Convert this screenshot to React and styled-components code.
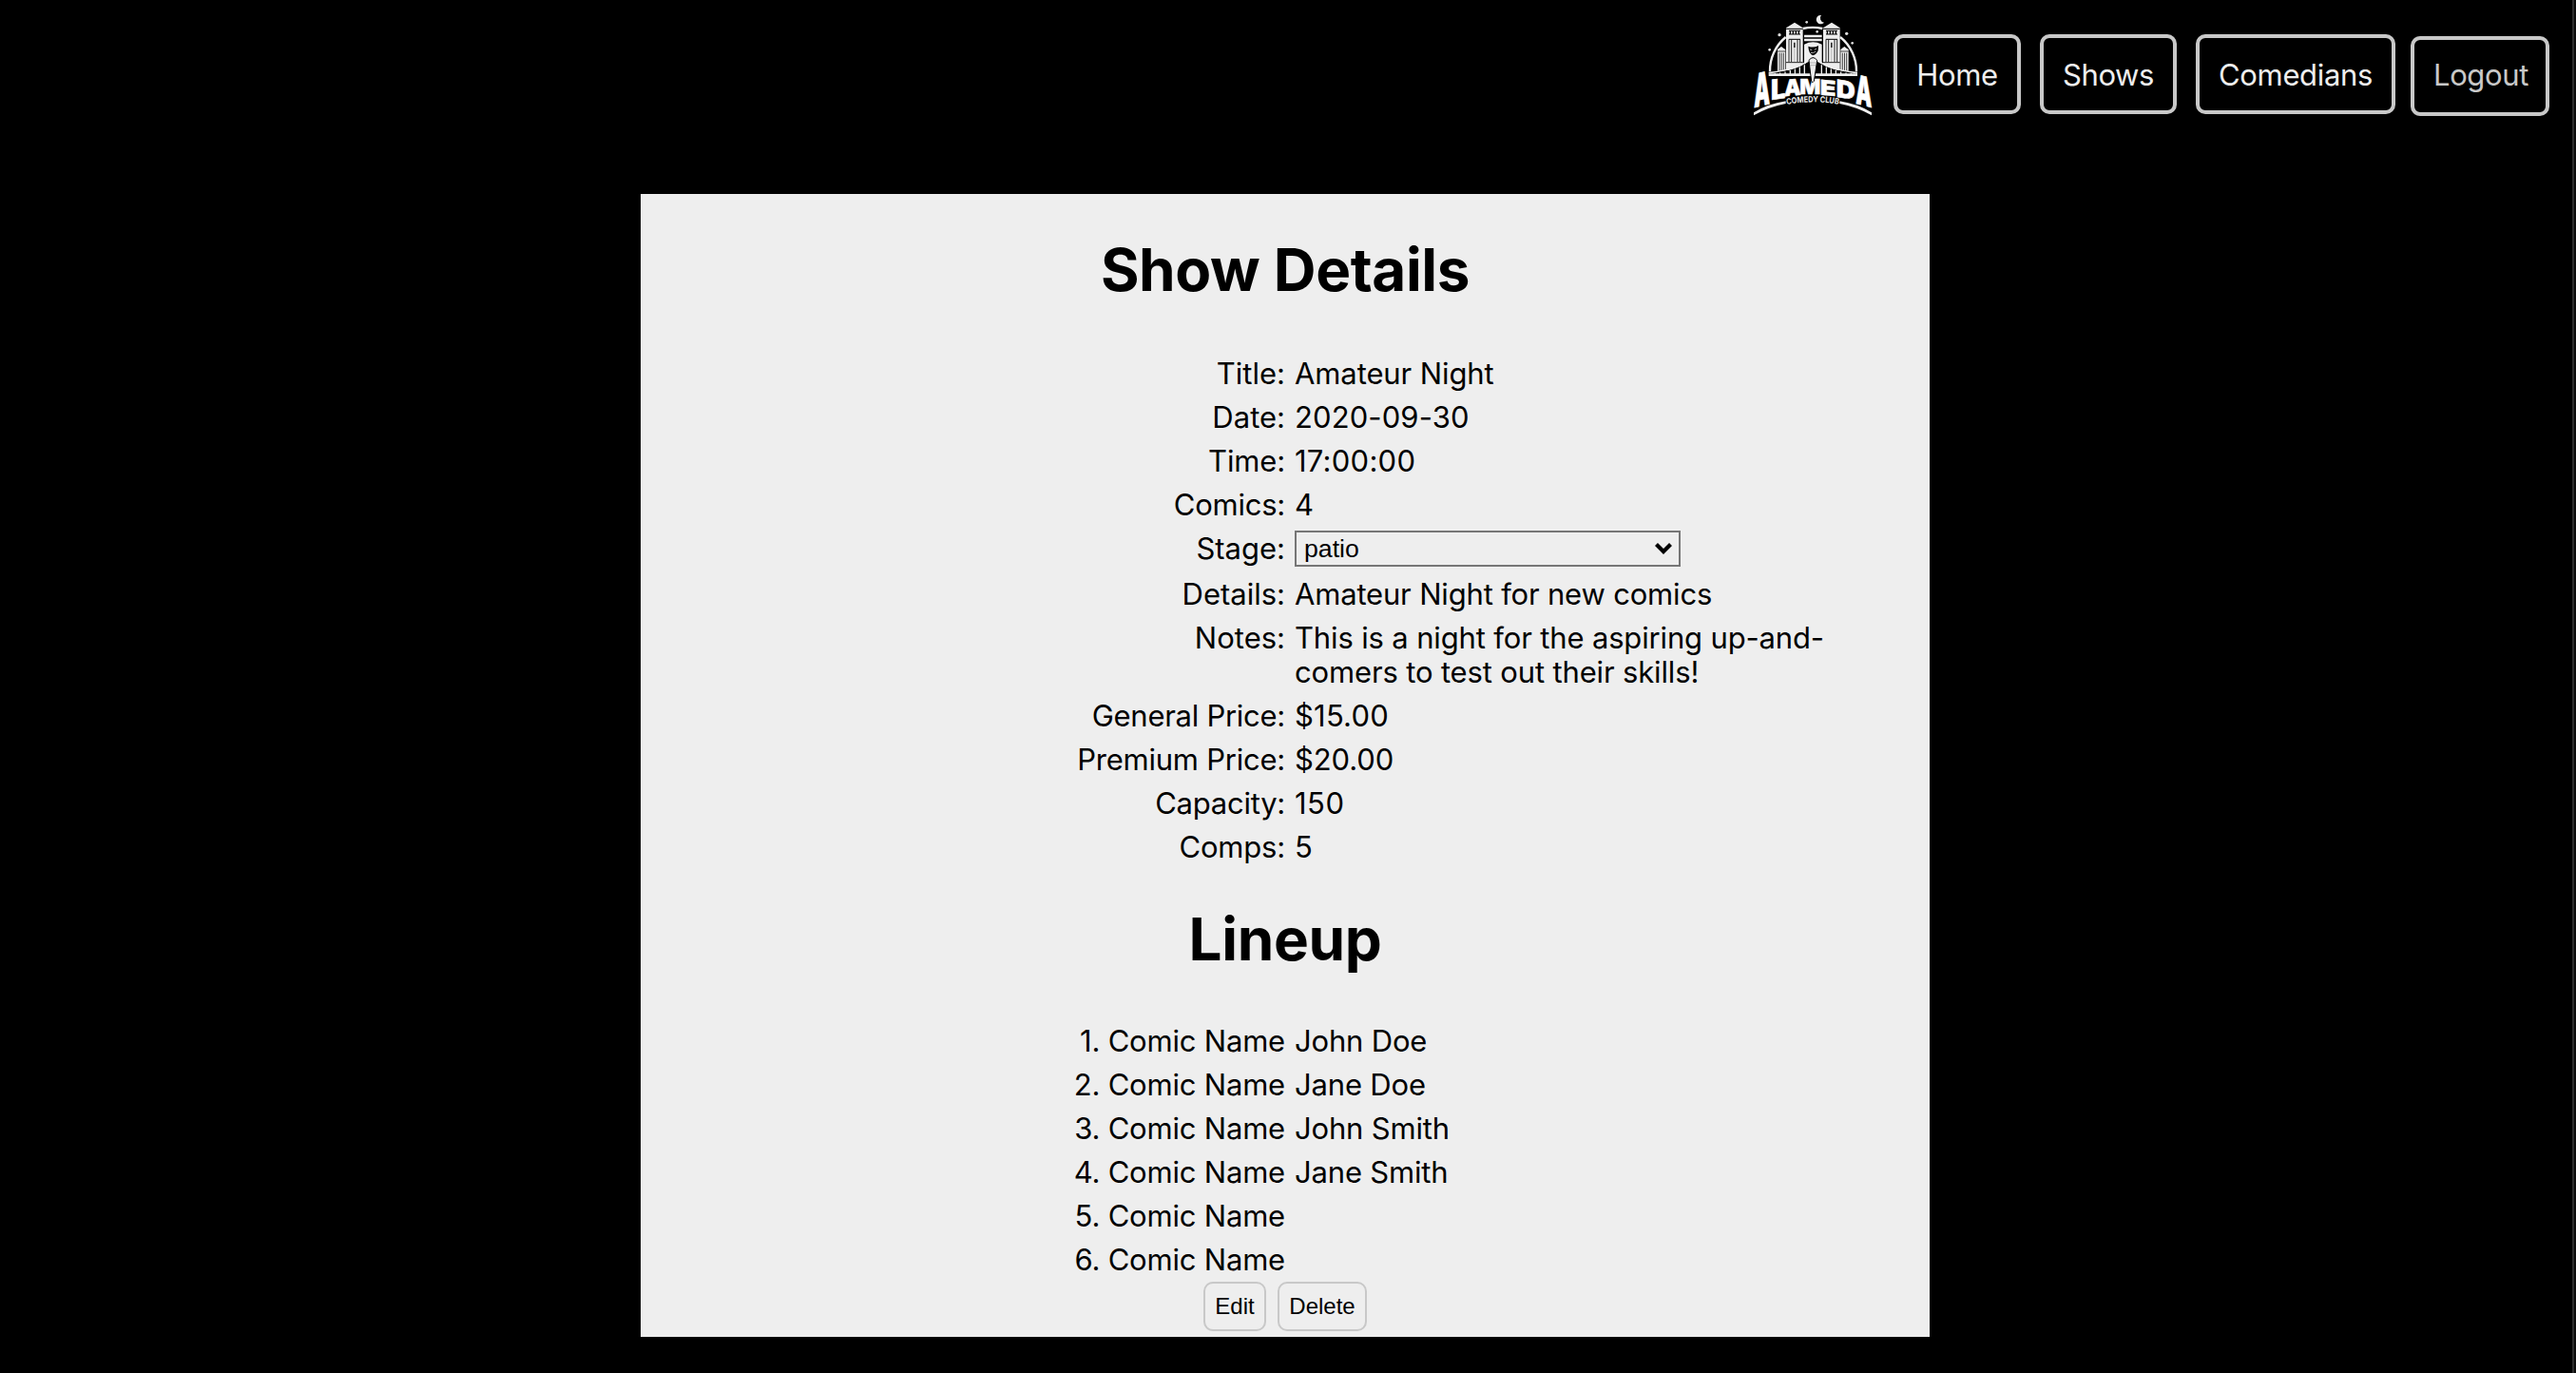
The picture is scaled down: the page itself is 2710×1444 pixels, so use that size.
import React from 'react';
import styled, { createGlobalStyle } from 'styled-components';

const GlobalStyle = createGlobalStyle`
  * { box-sizing: border-box; }
  body {
    margin: 0;
    background: #000;
    color: #000;
    font-family: Inter, "Liberation Sans", sans-serif;
    font-size: 31px;
    overflow: hidden;
  }
`;

const Page = styled.div`
  width: 100%;
  height: 1444px;
  background: #000;
  display: flex;
`;

const Content = styled.div`
  flex: 1;
`;

const ScrollTrack = styled.div`
  width: 4px;
  background: #0c0c0c;
  border-left: 2px solid #2e2e2e;
`;

const Nav = styled.nav`
  height: 204px;
  padding: 14px 24px 0 0;
  display: flex;
  justify-content: flex-end;
  align-items: flex-start;
`;

const Logo = styled.svg`
  width: 128px;
  height: 110px;
  margin-right: 20px;
  display: block;
`;

const NavButton = styled.button`
  width: ${(p) => p.$w}px;
  height: 84px;
  margin: 22px ${(p) => p.$gap || 0}px 0 0;
  padding: 2px 0 0;
  border: 4px solid #c8c8c8;
  border-radius: 10px;
  background: transparent;
  color: #eee;
  font: 400 31px/36px Inter, sans-serif;
  letter-spacing: -0.35px;
`;

const LogoutButton = styled(NavButton)`
  margin-top: 24px;
  padding: 0 0 2px 2px;
  color: #c8c8c8;
`;

const Panel = styled.main`
  width: 1356px;
  height: 1202px;
  margin-left: 674px;
  background: #eee;
`;

const Heading = styled.h1`
  margin: 0;
  height: ${(p) => p.$h}px;
  padding-top: ${(p) => p.$top}px;
  text-align: center;
  font-size: 62px;
  line-height: 75px;
  font-weight: 700;
  letter-spacing: -0.38px;
`;

const Row = styled.div`
  display: grid;
  grid-template-columns: 678px 570px;
  column-gap: 10px;
  line-height: 36px;
  min-height: 36px;
  margin-bottom: ${(p) => p.$mb || 10}px;
`;

const Label = styled.span`
  text-align: right;
  white-space: nowrap;
  letter-spacing: ${(p) => p.$ls || 0}px;
`;

const Value = styled.span`
  letter-spacing: ${(p) => p.$ls || 0}px;
`;

const Select = styled.div`
  width: 406px;
  height: 38px;
  margin: -1px 0 -1px;
  padding: 0 7px 0 8px;
  border: 2px solid #767676;
  display: flex;
  align-items: center;
  justify-content: space-between;
  font: 26.67px/34px "Liberation Sans", sans-serif;
`;

const Chevron = styled.svg`
  width: 18px;
  height: 13px;
  overflow: visible;
`;

const Actions = styled.div`
  display: flex;
  gap: 12px;
  padding-left: 592px;
`;

const ActionButton = styled.button`
  width: ${(p) => p.$w}px;
  height: 52px;
  padding: 0;
  border: 2px solid #c8c8c8;
  border-radius: 10px;
  background: #eee;
  color: #000;
  font: 24px/28px "Liberation Sans", sans-serif;
`;

const details = [
  { label: 'Title', value: 'Amateur Night', vs: -0.1 },
  { label: 'Date', value: '2020-09-30', vs: 0.1 },
  { label: 'Time', value: '17:00:00', ls: -0.15, vs: 0.25 },
  { label: 'Comics', value: '4', ls: -0.25 },
  { label: 'Stage', value: 'patio', select: true },
  { label: 'Details', value: 'Amateur Night for new comics', vs: -0.18 },
  { label: 'Notes', value: 'This is a night for the aspiring up-and-comers to test out their skills!', vs: -0.15 },
  { label: 'General Price', value: '$15.00', ls: -0.27, vs: 0.2 },
  { label: 'Premium Price', value: '$20.00', ls: -0.23, vs: -0.1 },
  { label: 'Capacity', value: '150', ls: -0.25, vs: 0.5 },
  { label: 'Comps', value: '5', ls: -0.2 },
];

const lineup = ['John Doe', 'Jane Doe', 'John Smith', 'Jane Smith', '', ''];

const letters = [
  { ch: 'A', x: 46, y: 339, w: 50, h: 104, skew: -14 },
  { ch: 'L', x: 99, y: 315, w: 46, h: 63, skew: -8 },
  { ch: 'A', x: 141, y: 304, w: 53, h: 52, skew: -5 },
  { ch: 'M', x: 190, y: 298, w: 66, h: 46, skew: 0 },
  { ch: 'E', x: 254, y: 299, w: 50, h: 48, skew: 5 },
  { ch: 'D', x: 305, y: 305, w: 60, h: 55, skew: 9 },
  { ch: 'A', x: 367, y: 326, w: 51, h: 92, skew: 14 },
];

const stars = [[212, 70, 4], [245, 100, 4], [126, 110, 5], [95, 157, 4], [338, 106, 5], [356, 136, 4]];

const hangers = [112, 128, 144, 160, 175, 190, 205, 259, 274, 289, 304, 320, 336, 352];

function cableY(x) {
  const t = Math.abs(x - 232) / 140;
  return 232 - 42 * (1 - t) * (1 - t);
}

function Tower({ x }) {
  return (
    <g transform={`translate(${x} 0)`}>
      <path d="M0 88 L27 71 L53 88 V222 H0Z" fill="#eee" />
      <path d="M0 91H53M9 97H45M9 108H45M9 124H45" stroke="#000" strokeWidth="3" />
      <path d="M13 97V108M22 97V108M31 97V108M40 97V108" stroke="#000" strokeWidth="4" />
      <path d="M9 124V195M17 124V195M36 124V195M44 124V195M0 197H53" stroke="#222" strokeWidth="3" />
      <path d="M26.500 134V150" stroke="#000" strokeWidth="4" />
      <path d="M26.500 150V195" stroke="#999" strokeWidth="2" />
    </g>
  );
}

function SideTower({ x }) {
  return (
    <g transform={`translate(${x} 0)`}>
      <path d="M0 156 L4 153 L12 147 L20 153 L25 156 V224 H0Z" fill="#eee" />
      <path d="M0 162H25M6 167V222M12.500 167V222M19 167V222" stroke="#222" strokeWidth="2.500" />
    </g>
  );
}

function ClubLogo() {
  return (
    <Logo viewBox="42 42 384 330" role="img" aria-label="Alameda Comedy Club">
      <path d="M96 226A137 137 0 0 1 146 117M200 90A137 137 0 0 1 262 90M318 117A137 137 0 0 1 369 226" fill="none" stroke="#eee" strokeWidth="7" />
      <path d="M258 48A14 14 0 1 0 267 71A14 14 0 0 1 258 48Z" fill="#eee" />
      {stars.map(([x, y, r]) => <circle key={x} cx={x} cy={y} r={r} fill="#ddd" />)}
      <SideTower x={120} />
      <SideTower x={319} />
      <path d="M204 110H260V118H204ZM204 122H260V130H204Z" fill="#eee" />
      <path d="M204 140Q232 126 260 140V215H204Z" fill="#eee" />
      <path d="M217 146Q234 152 249 144L248 160Q242 174 231 175Q218 168 217 146Z" fill="#000" />
      <path d="M222 156L229 158M236 157L243 154M225 166Q233 169 241 162" fill="none" stroke="#ccc" strokeWidth="2.500" />
      <Tower x={147} />
      <Tower x={264} />
      <path d="M92 230Q190 226 232 181Q274 226 372 230V246H92Z" fill="#000" />
      <path d="M92 230Q174 220 214 194Q232 178 250 194Q290 220 372 230" fill="none" stroke="#eee" strokeWidth="5" />
      {hangers.map((x) => <path key={x} d={`M${x} ${cableY(x)}V234`} stroke="#eee" strokeWidth="4" />)}
      <path d="M92 236H372" stroke="#eee" strokeWidth="8" />
      <g fill="#fff" stroke="#fff" strokeWidth="1.500" fontFamily="Inter, sans-serif" fontWeight="900">
        {letters.map((l) => (
          <text
            key={l.x}
            transform={`translate(${l.x} ${l.y}) skewY(${l.skew}) scale(1 ${l.h / 50.9})`}
            fontSize="70"
            textLength={l.w}
            lengthAdjust="spacingAndGlyphs"
          >
            {l.ch}
          </text>
        ))}
      </g>
      <path d="M219 190Q232 174 245 190L240 225L235 256L231 260L227 256L223 225Z" fill="#eee" stroke="#000" strokeWidth="3" />
      <path d="M222 198H242M223 206H241" stroke="#999" strokeWidth="2" />
      <path id="club-arc" d="M149 330Q232 314 315 330" fill="none" />
      <text fill="#eee" fontFamily="Inter, sans-serif" fontWeight="700" fontSize="26">
        <textPath href="#club-arc" textLength="165" lengthAdjust="spacingAndGlyphs">COMEDY CLUB</textPath>
      </text>
      <path d="M45 355Q88 328 146 319V327Q90 338 45 364ZM417 355Q374 328 316 319V327Q372 338 417 364Z" fill="#eee" />
    </Logo>
  );
}

export default function App() {
  return (
    <>
      <GlobalStyle />
      <Page>
        <Content>
          <Nav>
            <ClubLogo />
            <NavButton $w={134} $gap={20}>Home</NavButton>
            <NavButton $w={144} $gap={20}>Shows</NavButton>
            <NavButton $w={210} $gap={16}>Comedians</NavButton>
            <LogoutButton $w={146}>Logout</LogoutButton>
          </Nav>
          <Panel>
            <Heading $top={42} $h={171}>Show Details</Heading>
            {details.map(({ label, value, select, ls, vs }) => (
              <Row key={label} $mb={select ? 12 : 10}>
                <Label $ls={ls}>{label}:</Label>
                {select ? (
                  <Select>
                    {value}
                    <Chevron viewBox="0 0 18 13">
                      <path d="M1.500 1.500 9 9 16.500 1.500" fill="none" stroke="#000" strokeWidth="4.200" />
                    </Chevron>
                  </Select>
                ) : <Value $ls={vs}>{value}</Value>}
              </Row>
            ))}
            <Heading $top={31} $h={158}>Lineup</Heading>
            {lineup.map((name, i) => (
              <Row key={i} $mb={i === lineup.length - 1 ? 5 : 10}>
                <Label $ls={-0.2}>{i + 1}. Comic Name</Label>
                <Value $ls={-0.18}>{name}</Value>
              </Row>
            ))}
            <Actions>
              <ActionButton $w={66}>Edit</ActionButton>
              <ActionButton $w={94}>Delete</ActionButton>
            </Actions>
          </Panel>
        </Content>
        <ScrollTrack />
      </Page>
    </>
  );
}
